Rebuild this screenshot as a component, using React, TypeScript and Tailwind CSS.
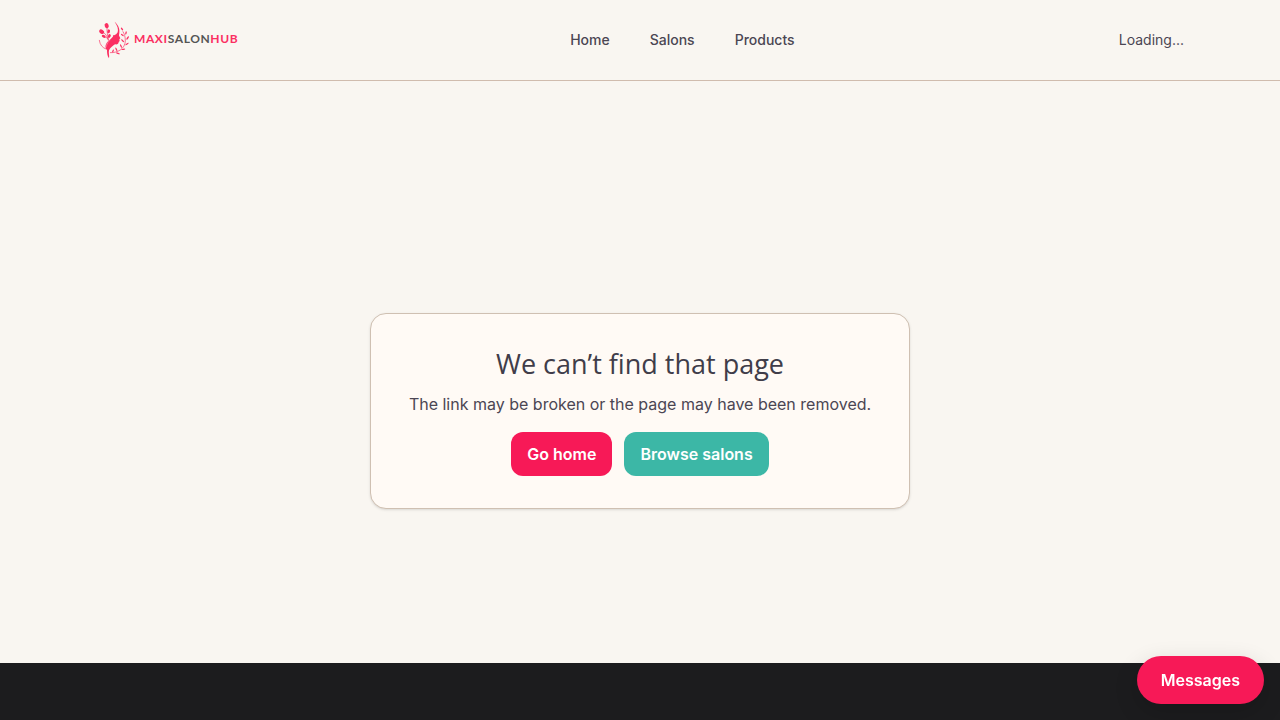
import React from "react";

const navLinks = ["Home", "Salons", "Products"];

function LogoMark() {
  return (
    <svg viewBox="24 24 96 114" className="h-[38px] w-8" fill="#fb2f62" stroke="none" aria-hidden="true">
      <path d="M74 26C83 34 90 45 88 59C88 63 86 66 88 70L91 76L88 79L89 84L86 87C86 93 82 95 75 94C68 99 60 104 57 112C55 120 59 127 57 136C52 130 51 119 51 111C43 103 47 91 55 84C64 77 70 72 70 66C75 68 80 63 83 58C86 48 82 38 74 26Z" />
      <path d="M50 104C46 94 54 85 64 78C56 86 50 94 50 104Z" fill="#fff" opacity=".4" />
      <g>
        <ellipse cx="50" cy="38" rx="6" ry="8" transform="rotate(-18 50 38)" />
        <ellipse cx="35" cy="56" rx="6" ry="8" transform="rotate(-60 35 56)" />
        <ellipse cx="56" cy="55" rx="4" ry="6" transform="rotate(15 56 55)" />
        <ellipse cx="41" cy="70" rx="4" ry="6" transform="rotate(-65 41 70)" />
        <ellipse cx="58" cy="69" rx="4" ry="6" transform="rotate(25 58 69)" />
      </g>
      <g fill="none" stroke="#fb2f62" strokeWidth="2" strokeLinecap="round">
        <path d="M51 44C50 57 54 68 55 81M40 58C48 63 52 71 55 81M44 71L53 76" />
        <path d="M28 82C30 96 37 104 48 108" />
        <path d="M61 119C82 120 105 108 106 84C106 70 103 63 99 56" />
      </g>
      <g>
        <ellipse cx="96" cy="48" rx="2" ry="5" transform="rotate(-38 96 48)" />
        <ellipse cx="108" cy="60" rx="2" ry="5" transform="rotate(15 108 60)" />
        <ellipse cx="97" cy="66" rx="2" ry="5" transform="rotate(-55 97 66)" />
        <ellipse cx="113" cy="75" rx="2" ry="6" transform="rotate(35 113 75)" />
        <ellipse cx="98" cy="83" rx="2" ry="6" transform="rotate(-45 98 83)" />
        <ellipse cx="111" cy="93" rx="2" ry="6" transform="rotate(55 111 93)" />
        <ellipse cx="93" cy="99" rx="2" ry="6" transform="rotate(-25 93 99)" />
        <ellipse cx="100" cy="109" rx="2" ry="6" transform="rotate(80 100 109)" />
        <ellipse cx="79" cy="109" rx="2" ry="6" transform="rotate(-25 79 109)" />
        <ellipse cx="84" cy="121" rx="2" ry="6" transform="rotate(-70 84 121)" />
        <ellipse cx="69" cy="114" rx="2" ry="5" transform="rotate(25 69 114)" />
      </g>
    </svg>
  );
}

function Header() {
  return (
    <header className="border-b border-[#d0bcae]">
      <div className="mx-auto flex h-20 max-w-[1280px] items-center justify-between px-24">
        <a href="#" className="flex w-[150px] items-center gap-1 pl-0.5" aria-label="MaxiSalonHub">
          <LogoMark />
          <span className="pb-0.5 font-['Lato',sans-serif] text-xs leading-4 font-bold tracking-wider text-[#fb2f62]">
            MAXI<span className="text-[#555555]">SALON</span>HUB
          </span>
        </a>
        <nav className="flex gap-10 text-sm font-medium">
          {navLinks.map((label) => (
            <a key={label} href="#">
              {label}
            </a>
          ))}
        </nav>
        <span className="text-sm">Loading...</span>
      </div>
    </header>
  );
}

export default function App() {
  return (
    <div className="flex min-h-screen flex-col bg-[#f9f6f1] font-['Inter',sans-serif] text-[#4b4653]">
      <Header />
      <main className="mt-[78px] flex min-h-[70vh] items-center justify-center px-4">
        <section className="w-full max-w-[540px] rounded-2xl border border-[#cfc0b2] bg-[#fffaf5] p-8 text-center shadow-sm">
          <h1 className="mb-[10px] font-['Open_Sans','Noto_Sans',sans-serif] text-[27px] leading-9 text-[#403d49]">
            We can’t find that page
          </h1>
          <p className="mb-4 text-base">The link may be broken or the page may have been removed.</p>
          <div className="flex justify-center gap-3 font-semibold text-white">
            <a href="#" className="rounded-xl bg-[#f71957] px-4 py-[10px]">
              Go home
            </a>
            <a href="#" className="rounded-xl bg-[#3cb7a6] px-4 py-[10px]">
              Browse salons
            </a>
          </div>
        </section>
      </main>
      <footer className="flex-1 bg-[#1c1c1e]" />
      <button
        type="button"
        className="fixed right-4 bottom-4 rounded-full bg-[#f71957] px-6 py-3 font-semibold text-white shadow-[0_8px_24px_rgba(0,0,0,0.16)]"
      >
        Messages
      </button>
    </div>
  );
}
